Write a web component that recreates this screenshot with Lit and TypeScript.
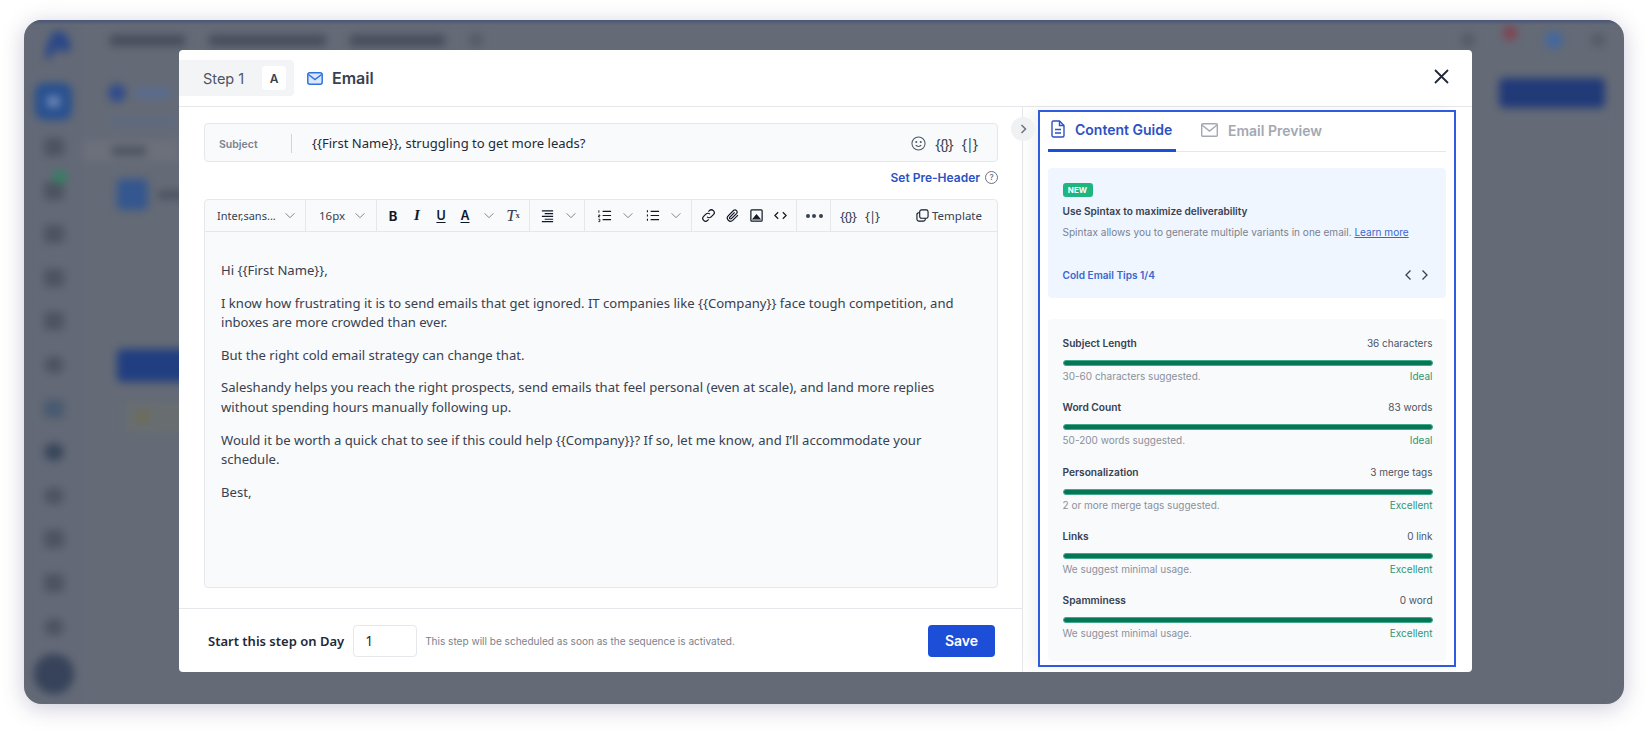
import { LitElement, html, css, svg } from "lit";
import { customElement } from "lit/decorators.js";

const chevron = html`<svg class="chev" viewBox="0 0 12 8"><polyline points="1,1.5 6,6.5 11,1.5"></polyline></svg>`;

const icons = {
	align: svg`<path d="M2 3h12M5 6h9M2 9h12M5 12h9M2 14.5h12"/>`,
	ol: svg`<path d="M6 3.5h9M6 8h9M6 12.5h9"/><path d="M2 2.5v2.5M1.5 7.5h1.5v1h-1.5v1h1.5M1.5 12h1.5v2.500h-1.500" stroke-width="1"/>`,
	ul: svg`<path d="M6 3.500h9M6 8h9M6 12.500h9"/><path d="M2 3.500h1.200M2 8h1.200M2 12.500h1.200" stroke-width="2"/>`,
	link: svg`<path d="M6.500 9.500a3 3 0 0 0 4.300 0l2.400-2.400a3 3 0 0 0-4.300-4.300l-1 1"/><path d="M9.500 6.500a3 3 0 0 0-4.300 0L2.800 8.900a3 3 0 0 0 4.300 4.300l1-1"/>`,
	clip: svg`<path d="M13.800 7.600l-5.600 5.600a3.400 3.400 0 0 1-4.800-4.800l5.900-5.900a2.300 2.300 0 0 1 3.200 3.200l-5.700 5.700a1.100 1.100 0 0 1-1.600-1.600l5.100-5.100"/>`,
	image: svg`<rect x="2" y="2" width="12" height="12" rx="1"/><path d="M4.500 11.500l3.500-4 3.500 4z" fill="currentColor"/>`,
	code: svg`<path d="M5.500 4.500L2 8l3.500 3.500M10.500 4.500L14 8l-3.500 3.500"/>`,
};

const ico = (p: unknown) => html`<svg class="ico" viewBox="0 0 16 16">${p}</svg>`;

@customElement("blurred-page")
export class BlurredPage extends LitElement {
	static styles = css`
		:host {
			display: flex;
			height: 100%;
			filter: blur(4.500px);
		}
		.side {
			width: 59px;
			flex: none;
			display: flex;
			flex-direction: column;
			align-items: center;
			padding-top: 11px;
			box-sizing: border-box;
			background: #636976;
		}
		.logo {
			width: 32px;
			height: 28px;
			margin: 0 0 24px 6px;
			fill: #2a4788;
		}
		.active {
			width: 37px;
			height: 37px;
			border-radius: 9px;
			background: #28508f;
			margin-bottom: 18px;
			display: flex;
			align-items: center;
			justify-content: center;
		}
		.active i {
			width: 13px;
			height: 11px;
			background: #6d86b6;
		}
		.nav {
			position: relative;
			width: 20px;
			height: 18px;
			margin-bottom: 25.600px;
			background: #4d5360;
			border-radius: 3px;
		}
		.nav.round {
			border-radius: 50%;
		}
		.nav.blue {
			background: #485a70;
		}
		.nav.dark {
			background: #37465a;
		}
		.dot {
			position: absolute;
			top: -12px;
			left: 9px;
			width: 14px;
			height: 14px;
			border-radius: 50%;
			background: #338063;
		}
		.avatar {
			width: 40px;
			height: 40px;
			flex: none;
			border-radius: 50%;
			background: #36435a;
			margin-top: -7px;
		}
		.main {
			flex: 1;
			min-width: 0;
			background: #646a76;
			padding: 0 19px 0 27px;
		}
		.top {
			height: 40px;
			display: flex;
			align-items: center;
			gap: 24px;
		}
		.top b {
			height: 11px;
			background: #464c5a;
		}
		.top .ic {
			height: 14px;
			width: 14px;
			background: #555b66;
			border-radius: 50%;
		}
		.top .end {
			margin-left: auto;
			display: flex;
			align-items: center;
			gap: 28px;
		}
		.top .red {
			background: #84404e;
			margin-top: -14px;
		}
		.top .blu {
			background: #43689f;
			height: 18px;
			width: 18px;
		}
		.tabs {
			display: flex;
			align-items: center;
			margin-top: 18px;
			height: 30px;
		}
		.tabs .circle {
			width: 18px;
			height: 18px;
			border-radius: 50%;
			background: #2f4c8c;
			margin-left: -2px;
		}
		.tabs .label {
			width: 35px;
			height: 8px;
			margin-left: 9px;
			background: #566c96;
		}
		.tabs .add {
			margin-left: auto;
			width: 106px;
			height: 30px;
			border-radius: 5px;
			background: #213a78;
		}
		.line {
			width: 66px;
			height: 3px;
			margin: 12px 0 0 0;
			background: #566b94;
		}
		.select {
			height: 22px;
			margin: 17px 0 0 -27px;
			width: 96px;
			background: #6b707b;
			display: flex;
			align-items: center;
			padding-left: 29px;
			box-sizing: border-box;
		}
		.select b {
			width: 34px;
			height: 8px;
			background: #4a505d;
		}
		.seq {
			display: flex;
			align-items: center;
			gap: 10px;
			margin: 17px 0 0 7px;
		}
		.seq i {
			width: 31px;
			height: 31px;
			border-radius: 5px;
			background: #34578f;
		}
		.seq b {
			width: 30px;
			height: 8px;
			background: #4a505d;
		}
		.btn {
			width: 90px;
			height: 33px;
			border-radius: 5px;
			margin: 139px 0 0 7px;
			background: #213f80;
		}
		.note {
			width: 90px;
			height: 30px;
			margin: 20px 0 0 15px;
			background: #686e70;
			display: flex;
			align-items: center;
			padding-left: 13px;
			box-sizing: border-box;
		}
		.note i {
			width: 9px;
			height: 12px;
			background: #6f6c50;
		}
	`;

	render() {
		return html`
			<div class="side">
				<svg class="logo" viewBox="0 0 28 26"><path d="M10 1h11l6 11-2 7-8 0-3-4-3 5-4 6H3l1-11z"></path></svg>
				<div class="active"><i></i></div>
				<div class="nav"></div>
				<div class="nav"><span class="dot"></span></div>
				<div class="nav"></div>
				<div class="nav"></div>
				<div class="nav"></div>
				<div class="nav round"></div>
				<div class="nav blue"></div>
				<div class="nav round dark"></div>
				<div class="nav round"></div>
				<div class="nav"></div>
				<div class="nav"></div>
				<div class="nav round"></div>
				<div class="avatar"></div>
			</div>
			<div class="main">
				<div class="top">
					<b style="width:75px"></b><b style="width:117px"></b><b style="width:95px"></b>
					<span class="ic"></span>
					<div class="end">
						<span class="ic"></span><span class="ic red"></span><span class="ic blu"></span><span class="ic"></span>
					</div>
				</div>
				<div class="tabs">
					<span class="circle"></span><span class="label"></span>
					<span class="add"></span>
				</div>
				<div class="line"></div>
				<div class="select"><b></b></div>
				<div class="seq"><i></i><b></b></div>
				<div class="btn"></div>
				<div class="note"><i></i></div>
			</div>
		`;
	}
}

const metrics = [
	{ name: "Subject Length", value: "36 characters", hint: "30-60 characters suggested.", status: "Ideal" },
	{ name: "Word Count", value: "83 words", hint: "50-200 words suggested.", status: "Ideal" },
	{ name: "Personalization", value: "3 merge tags", hint: "2 or more merge tags suggested.", status: "Excellent" },
	{ name: "Links", value: "0 link", hint: "We suggest minimal usage.", status: "Excellent" },
	{ name: "Spamminess", value: "0 word", hint: "We suggest minimal usage.", status: "Excellent" },
];

@customElement("guide-panel")
export class GuidePanel extends LitElement {
	static styles = css`
		:host {
			display: flex;
			flex-direction: column;
			height: 100%;
			box-sizing: border-box;
			border: 2px solid #2f5be0;
			padding: 0 8px 4px;
			background: #fff;
			font-family: Inter, sans-serif;
			box-shadow: -8px 0 14px rgba(0, 0, 0, 0.05);
		}
		.tabs {
			display: flex;
			height: 40px;
			flex: none;
			box-sizing: border-box;
			border-bottom: 1px solid #e5e7eb;
		}
		.tab {
			display: flex;
			align-items: center;
			gap: 10px;
			font-size: 14px;
			font-weight: 600;
			color: #a3a8b2;
			padding-bottom: 3px;
			box-sizing: border-box;
		}
		.tab svg {
			fill: none;
			stroke: currentColor;
			stroke-width: 1.400;
		}
		.tab.on {
			width: 128px;
			height: 40px;
			padding-left: 3px;
			color: #2b52c4;
			border-bottom: 3px solid #1d4ed8;
		}
		.tab.off {
			margin-left: 25px;
			gap: 10px;
		}
		.tip {
			flex: none;
			margin-top: 16px;
			padding: 15px 13.500px 15px 14.500px;
			background: #eff6ff;
			border-radius: 4px;
		}
		.badge {
			display: block;
			width: 30px;
			height: 14px;
			line-height: 14px;
			border-radius: 3px;
			background: #1fb57f;
			color: #fff;
			font-size: 8px;
			font-weight: 700;
			text-align: center;
		}
		.tip-title {
			margin-top: 6px;
			font-size: 10.100px;
			font-weight: 600;
			line-height: 16px;
			color: #374151;
		}
		.tip-text {
			margin-top: 5px;
			font-size: 10.050px;
			line-height: 16px;
			color: #7b828e;
		}
		.tip-text a {
			color: #3b66cf;
			text-decoration: underline;
		}
		.tip-foot {
			margin-top: 27px;
			display: flex;
			align-items: center;
			justify-content: space-between;
			font-size: 10.100px;
			font-weight: 600;
			line-height: 16px;
			color: #3b66cf;
		}
		.pager {
			display: flex;
			gap: 7px;
			margin-right: 4px;
		}
		.pager svg {
			width: 9px;
			height: 12px;
			fill: none;
			stroke: #374151;
			stroke-width: 1.300;
		}
		.stats {
			flex: 1;
			margin-top: 21px;
			padding: 16px 13.500px 0 14.500px;
			background: #f9fafb;
			border-radius: 4px;
			display: flex;
			flex-direction: column;
			gap: 15.250px;
		}
		.row {
			height: 49px;
		}
		.line {
			display: flex;
			justify-content: space-between;
			font-size: 10px;
			line-height: 16px;
		}
		.name {
			font-size: 10.200px;
			font-weight: 600;
			color: #374151;
		}
		.value {
			color: #4b5563;
		}
		.hint {
			color: #8a909b;
		}
		.status {
			color: #2f9673;
		}
		.bar {
			height: 4px;
			margin: 9px 0 2px;
			border: 1px solid #3fa98a;
			background: #067558;
			border-radius: 3px;
		}
	`;

	render() {
		return html`
			<div class="tabs">
				<div class="tab on">
					<svg width="14" height="18" viewBox="0 0 14 18"><path d="M2.500 1h6l4.500 4.500V15.500a1.500 1.500 0 0 1-1.500 1.500h-9A1.500 1.500 0 0 1 1 15.500v-13A1.500 1.500 0 0 1 2.500 1z"/><path d="M8.500 1v4.500H13M4 9.500h6M4 13h6"/></svg>
					Content Guide
				</div>
				<div class="tab off">
					<svg width="17" height="14" viewBox="0 0 17 14"><rect x="0.700" y="0.700" width="15.600" height="12.600" rx="1"/><path d="M1 2l7.500 6L16 2"/></svg>
					Email Preview
				</div>
			</div>
			<div class="tip">
				<span class="badge">NEW</span>
				<div class="tip-title">Use Spintax to maximize deliverability</div>
				<div class="tip-text">Spintax allows you to generate multiple variants in one email. <a>Learn more</a></div>
				<div class="tip-foot">
					Cold Email Tips 1/4
					<span class="pager">
						<svg viewBox="0 0 9 12"><polyline points="6.500,1.500 2,6 6.500,10.500"></polyline></svg>
						<svg viewBox="0 0 9 12"><polyline points="2.500,1.500 7,6 2.500,10.500"></polyline></svg>
					</span>
				</div>
			</div>
			<div class="stats">
				${metrics.map(
					(m) => html`
						<div class="row">
							<div class="line"><span class="name">${m.name}</span><span class="value">${m.value}</span></div>
							<div class="bar"></div>
							<div class="line"><span class="hint">${m.hint}</span><span class="status">${m.status}</span></div>
						</div>
					`
				)}
			</div>
		`;
	}
}

@customElement("app-root")
export class AppRoot extends LitElement {
	static styles = css`
		:host {
			display: block;
			height: 735px;
			padding: 20px 24px 31px 24px;
			box-sizing: border-box;
			background: #fff;
			font-family: Inter, sans-serif;
			color: #1f2937;
		}
		.frame {
			position: relative;
			height: 100%;
			border-radius: 18px;
			overflow: hidden;
			background: #646a76;
		}
		.shadow {
			height: 100%;
			border-radius: 18px;
			box-shadow: 0 4px 22px rgba(70, 70, 120, 0.28);
		}
		.edge {
			position: absolute;
			left: 0;
			right: 0;
			top: 0;
			height: 5px;
			background: linear-gradient(#4a5578, rgba(100, 106, 118, 0));
		}
		.modal {
			position: absolute;
			left: 155px;
			top: 30px;
			width: 1293px;
			height: 622px;
			background: #fff;
			border-radius: 4px;
			display: flex;
			flex-direction: column;
			overflow: hidden;
		}
		header {
			height: 57px;
			flex: none;
			box-sizing: border-box;
			border-bottom: 1px solid #e5e7eb;
			display: flex;
			align-items: center;
		}
		.step {
			width: 115px;
			height: 36px;
			padding-left: 24px;
			box-sizing: border-box;
			background: #f3f4f6;
			border-radius: 0 4px 4px 0;
			display: flex;
			align-items: center;
			font-size: 14.500px;
			color: #4b5563;
		}
		.variant {
			width: 24px;
			height: 24px;
			margin-left: 18px;
			border-radius: 4px;
			background: #fff;
			display: flex;
			align-items: center;
			justify-content: center;
			font-size: 12px;
			font-weight: 600;
			color: #374151;
		}
		.mail {
			width: 16px;
			height: 13px;
			margin: 0 10px 0 13px;
			fill: #dbe7fb;
			stroke: #2f73dd;
			stroke-width: 1.500;
		}
		.title {
			font-size: 16px;
			font-weight: 600;
			margin-left: -1px;
			color: #374151;
		}
		.close {
			margin: -3px 23px 0 auto;
			width: 15px;
			height: 15px;
			stroke: #1f2937;
			stroke-width: 1.800;
		}
		.body {
			flex: 1;
			min-height: 0;
			display: flex;
		}
		.left {
			width: 844px;
			flex: none;
			box-sizing: border-box;
			border-right: 1px solid #e5e7eb;
			display: flex;
			flex-direction: column;
			font-family: "Noto Sans", sans-serif;
		}
		.compose {
			flex: 1;
			min-height: 0;
			padding: 16px 24px 20px 25px;
			display: flex;
			flex-direction: column;
		}
		.subject {
			height: 39px;
			flex: none;
			box-sizing: border-box;
			background: #f9fafb;
			border: 1px solid #e5e7eb;
			border-radius: 4px;
			display: flex;
			align-items: center;
			padding: 1px 20px 0 14px;
		}
		.subject-label {
			width: 72px;
			height: 19px;
			line-height: 22px;
			box-sizing: content-box;
			border-right: 1px solid #d1d5db;
			font-family: Inter, sans-serif;
			font-size: 10.500px;
			font-weight: 600;
			color: #7b828e;
		}
		.subject-text {
			margin-left: 20px;
			font-size: 13.050px;
			color: #1f2937;
		}
		.vars {
			margin-left: auto;
			display: flex;
			align-items: center;
			gap: 9px;
			font-size: 14px;
			letter-spacing: -1px;
			color: #374151;
		}
		.smile {
			width: 15px;
			height: 15px;
			fill: none;
			stroke: #4b5563;
			stroke-width: 1.100;
		}
		.pre {
			height: 37px;
			flex: none;
			padding-bottom: 6px;
			box-sizing: border-box;
			display: flex;
			align-items: center;
			justify-content: flex-end;
			gap: 5px;
			font-family: Inter, sans-serif;
			font-size: 12px;
			font-weight: 600;
			color: #2b52c4;
		}
		.help {
			width: 11px;
			height: 11px;
			border: 1px solid #6b7280;
			border-radius: 50%;
			font-size: 8px;
			font-weight: 500;
			line-height: 11px;
			text-align: center;
			color: #6b7280;
		}
		.editor {
			flex: 1;
			min-height: 0;
			background: #f9fafb;
			border: 1px solid #e5e7eb;
			border-radius: 4px;
			display: flex;
			flex-direction: column;
		}
		.toolbar {
			height: 32px;
			flex: none;
			box-sizing: border-box;
			border-bottom: 1px solid #e5e7eb;
			display: flex;
			font-size: 11.500px;
			color: #374151;
		}
		.group {
			display: flex;
			align-items: center;
			flex: none;
			box-sizing: border-box;
			border-right: 1px solid #e5e7eb;
		}
		.g-font { width: 101px; padding-left: 12px; font-size: 11px; }
		.g-size { width: 71px; padding-left: 13px; }
		.g-format { width: 153px; padding-left: 4px; }
		.g-align { width: 55px; padding-left: 5px; }
		.g-list { width: 107px; padding-left: 7px; }
		.g-insert { width: 105px; padding-left: 4px; }
		.g-more { width: 34px; padding-left: 5px; }
		.g-vars { flex: 1; border-right: 0; padding: 0 15px 0 5px; }
		.g-font .chev { margin-left: 8px; }
		.g-size .chev { margin-left: 9px; }
		.item {
			width: 24px;
			height: 24px;
			display: flex;
			align-items: center;
			justify-content: center;
			color: #111827;
		}
		.item.b { font-family: Inter, sans-serif; font-size: 13px; font-weight: 700; }
		.item.i { font-family: "Liberation Serif", serif; font-size: 15px; font-weight: 700; font-style: italic; }
		.item.u { font-family: Inter, sans-serif; font-size: 12.500px; font-weight: 600; text-decoration: underline; text-underline-offset: 2px; }
		.item.t { font-family: "Liberation Serif", serif; font-size: 17px; font-style: italic; color: #374151; }
		.item.t sub { font-size: 8px; font-style: normal; font-weight: 700; vertical-align: -2px; }
		.item.brace { font-size: 13px; letter-spacing: -1px; color: #374151; }
		.chev {
			width: 12px;
			height: 7px;
			flex: none;
			fill: none;
			stroke: #6b7280;
			stroke-width: 1;
		}
		.ico {
			width: 15px;
			height: 15px;
			fill: none;
			stroke: currentColor;
			stroke-width: 1.300;
		}
		.dots {
			display: flex;
			gap: 2.500px;
		}
		.dots i {
			width: 4px;
			height: 4px;
			border-radius: 50%;
			background: #374151;
		}
		.template {
			margin-left: auto;
			display: flex;
			align-items: center;
			gap: 3px;
			font-size: 11.500px;
			color: #374151;
		}
		.template svg {
			width: 13px;
			height: 13px;
			fill: none;
			stroke: #111827;
			stroke-width: 1.200;
		}
		.content {
			flex: 1;
			padding: 29px 16px 0 16px;
			font-size: 13.100px;
			line-height: 19.600px;
			color: #374151;
		}
		.content p {
			margin: 0 0 13px;
		}
		footer {
			height: 64px;
			flex: none;
			box-sizing: border-box;
			border-top: 1px solid #e5e7eb;
			display: flex;
			align-items: center;
			padding: 0 27px 0 29px;
		}
		.start {
			font-size: 13px;
			font-weight: 600;
			color: #1f2937;
		}
		.day {
			width: 64px;
			height: 32px;
			margin-left: 9px;
			padding-left: 11px;
			box-sizing: border-box;
			background: #fff;
			border: 1px solid #e5e7eb;
			border-radius: 4px;
			display: flex;
			align-items: center;
			font-size: 14px;
			color: #1f2937;
		}
		.note {
			margin-left: 8px;
			font-family: Inter, sans-serif;
			font-size: 10.050px;
			color: #7b828e;
		}
		.save {
			margin-left: auto;
			width: 67px;
			height: 32px;
			border-radius: 4px;
			background: #1d4ed8;
			color: #fff;
			font-family: Inter, sans-serif;
			font-size: 14px;
			font-weight: 600;
			display: flex;
			align-items: center;
			justify-content: center;
		}
		.right {
			flex: 1;
			min-width: 0;
			padding: 3px 16px 5px 15px;
		}
		.toggle {
			position: absolute;
			left: 832px;
			top: 67px;
			width: 24px;
			height: 24px;
			border-radius: 50%;
			background: #f0f1f3;
			display: flex;
			align-items: center;
			justify-content: center;
		}
		.toggle svg {
			width: 7px;
			height: 10px;
			fill: none;
			stroke: #6b7280;
			stroke-width: 1.500;
		}
	`;

	render() {
		return html`
			<div class="shadow">
				<div class="frame">
					<blurred-page></blurred-page>
					<div class="edge"></div>
					<div class="modal">
						<header>
							<div class="step">Step 1<span class="variant">A</span></div>
							<svg class="mail" viewBox="0 0 16 13"><rect x="0.800" y="0.800" width="14.400" height="11.400" rx="2"></rect><path d="M1.500 2.500L8 7.500l6.500-5" fill="none"></path></svg>
							<span class="title">Email</span>
							<svg class="close" viewBox="0 0 15 15"><path d="M1 1l13 13M14 1L1 14"></path></svg>
						</header>
						<div class="body">
							<div class="left">
								<div class="compose">
									<div class="subject">
										<span class="subject-label">Subject</span>
										<span class="subject-text">{{First Name}}, struggling to get more leads?</span>
										<span class="vars">
											<svg class="smile" viewBox="0 0 16 16"><circle cx="8" cy="8" r="7"></circle><circle cx="5.600" cy="6.500" r="0.500"></circle><circle cx="10.400" cy="6.500" r="0.500"></circle><path d="M5 9.800c1.500 1.800 4.500 1.800 6 0"></path></svg>
											<span>{{}}</span><span>{|}</span>
										</span>
									</div>
									<div class="pre">Set Pre-Header<span class="help">?</span></div>
									<div class="editor">
										<div class="toolbar">
											<div class="group g-font">Inter,sans...${chevron}</div>
											<div class="group g-size">16px${chevron}</div>
											<div class="group g-format">
												<span class="item b">B</span><span class="item i">I</span><span class="item u">U</span><span class="item u">A</span>
												<span class="item">${chevron}</span><span class="item t">T<sub>x</sub></span>
											</div>
											<div class="group g-align"><span class="item">${ico(icons.align)}</span><span class="item">${chevron}</span></div>
											<div class="group g-list">
												<span class="item">${ico(icons.ol)}</span><span class="item">${chevron}</span>
												<span class="item">${ico(icons.ul)}</span><span class="item">${chevron}</span>
											</div>
											<div class="group g-insert">
												<span class="item">${ico(icons.link)}</span><span class="item">${ico(icons.clip)}</span>
												<span class="item">${ico(icons.image)}</span><span class="item">${ico(icons.code)}</span>
											</div>
											<div class="group g-more"><span class="item"><span class="dots"><i></i><i></i><i></i></span></span></div>
											<div class="group g-vars">
												<span class="item brace">{{}}</span><span class="item brace">{|}</span>
												<span class="template">
													<svg viewBox="0 0 14 14"><rect x="4" y="1" width="9" height="9" rx="2"></rect><path d="M4 4H3a2 2 0 0 0-2 2v5a2 2 0 0 0 2 2h5a2 2 0 0 0 2-2v-1"></path></svg>
													Template
												</span>
											</div>
										</div>
										<div class="content">
											<p>Hi {{First Name}},</p>
											<p>I know how frustrating it is to send emails that get ignored. IT companies like {{Company}} face tough competition, and inboxes are more crowded than ever.</p>
											<p>But the right cold email strategy can change that.</p>
											<p>Saleshandy helps you reach the right prospects, send emails that feel personal (even at scale), and land more replies without spending hours manually following up.</p>
											<p>Would it be worth a quick chat to see if this could help {{Company}}? If so, let me know, and I’ll accommodate your schedule.</p>
											<p>Best,</p>
										</div>
									</div>
								</div>
								<footer>
									<span class="start">Start this step on Day</span>
									<span class="day">1</span>
									<span class="note">This step will be scheduled as soon as the sequence is activated.</span>
									<span class="save">Save</span>
								</footer>
							</div>
							<div class="right"><guide-panel></guide-panel></div>
						</div>
						<div class="toggle"><svg viewBox="0 0 7 10"><polyline points="1.500,1 5.500,5 1.500,9"></polyline></svg></div>
					</div>
				</div>
			</div>
		`;
	}
}
